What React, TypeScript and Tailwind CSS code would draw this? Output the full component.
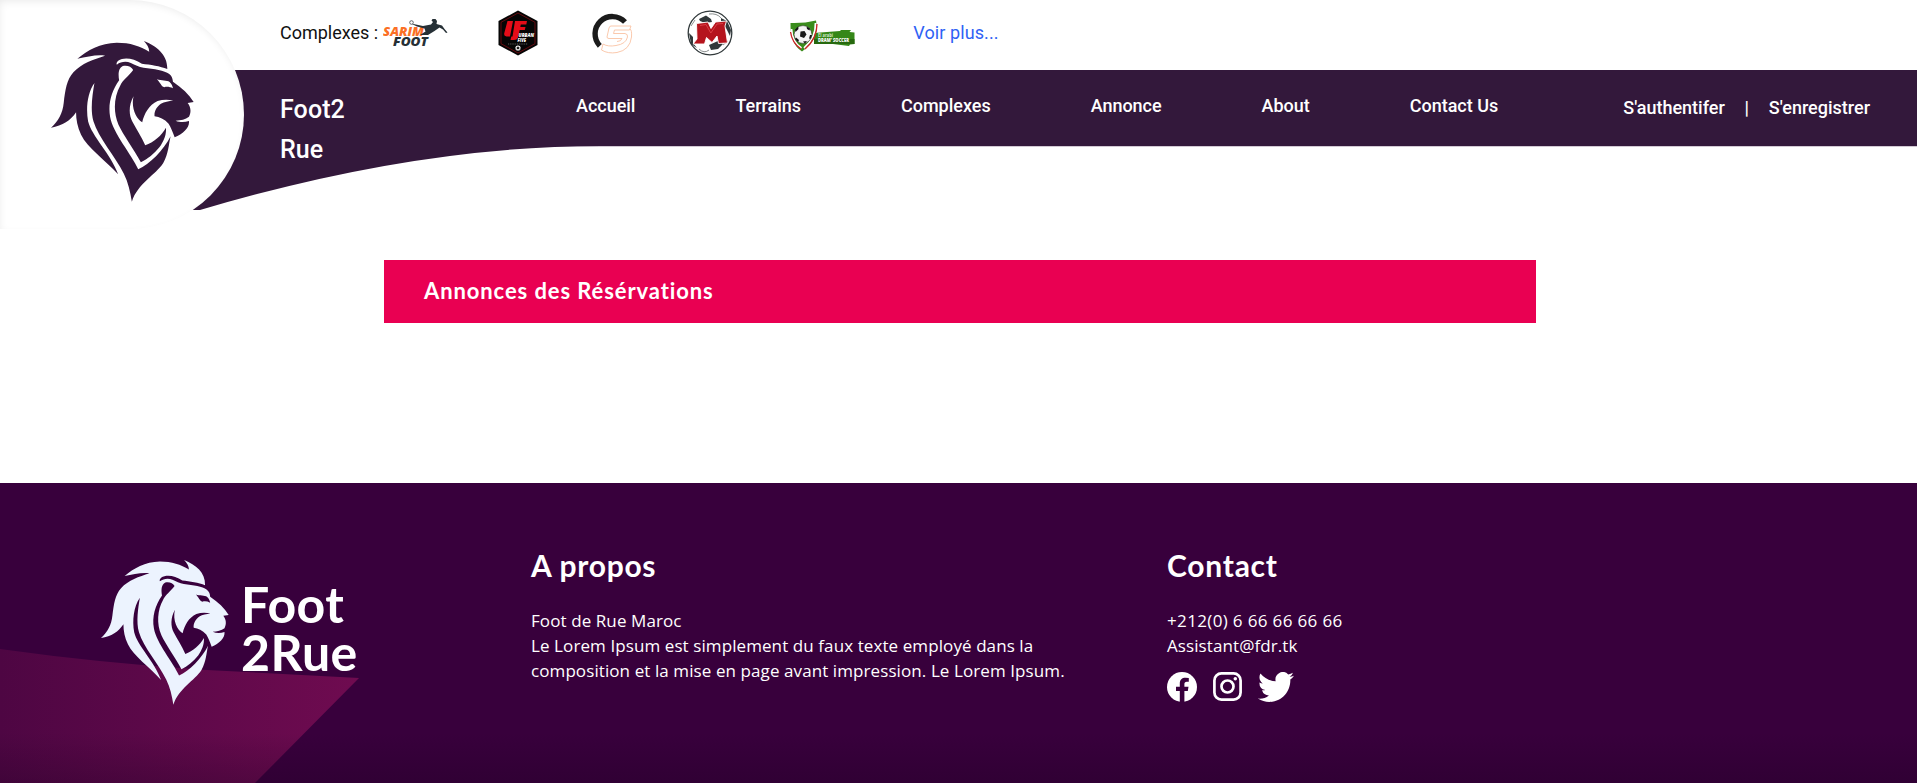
import React from "react";

const LION =
  "M232 177 C262 152 300 130 350 129 C390 129 420 139 447 156 C447 145 440 133 431 124 C470 140 502 165 501 208 C480 199 450 195 425 192 C400 176 372 171 354 183 C350 187 348 191 350 195 C362 186 378 184 392 190 C405 196 415 202 430 204 C462 208 492 212 507 223 C516 230 517 238 518 246 C545 264 566 284 580 307 L562 310 C572 322 573 338 566 351 C555 359 542 362 526 363 C540 369 553 368 566 364 C568 385 548 402 523 413 C518 398 512 384 505 372 C492 358 478 352 463 350 C461 335 470 320 482 312 C492 306 506 304 519 303 C505 299 488 299 472 304 C446 316 432 342 426 368 C408 358 392 325 400 290 C385 318 386 345 396 365 C408 388 424 412 435 437 C460 428 485 407 497 384 C499 405 490 425 478 442 C462 462 442 478 422 488 C402 450 368 404 355 375 C338 335 342 290 360 258 C368 240 385 230 399 211 C394 200 380 196 368 199 C354 206 354 225 357 242 C334 275 323 312 330 352 C338 400 395 465 414 509 C448 494 490 452 511 410 C505 435 505 462 489 490 C467 525 412 552 395 606 C390 575 384 548 371 522 C345 470 295 415 280 365 C270 330 277 285 283 250 C262 280 257 325 264 365 C275 410 330 460 354 524 C315 480 262 445 243 405 C232 382 228 360 228 338 C212 362 188 379 153 384 C175 365 188 340 191 310 C196 270 200 240 220 218 C245 190 280 180 315 168 C290 164 260 172 232 177 Z M470 239 C483 244 500 241 508 247 C514 253 517 259 518 266 C509 262 500 260 492 263 C483 261 480 248 470 239 Z";

function Lion({ className, fill }: { className: string; fill: string }) {
  return (
    <svg viewBox="153 124 428 483" preserveAspectRatio="none" className={className} aria-hidden="true">
      <path d={LION} fill={fill} fillRule="evenodd" />
    </svg>
  );
}

function SarimLogo() {
  return (
    <svg viewBox="0 0 66 30" className="h-[30px] w-[66px] shrink-0">
      <text x="0" y="18" fontFamily="Open Sans, sans-serif" fontWeight="800" fontStyle="italic" fontSize="11.5" textLength="41" lengthAdjust="spacingAndGlyphs" fill="#fb6f24">SARIM</text>
      <text x="10" y="28" fontFamily="Open Sans, sans-serif" fontWeight="800" fontStyle="italic" fontSize="11.5" textLength="35" lengthAdjust="spacingAndGlyphs" fill="#263036">FOOT</text>
      <path d="M28 5.5 L40 8 L48 6.500 L50 4 L48.500 2.500 L49.500 1 L52.500 1 L54 3 L53.500 6 L59 7.500 L61.500 11 L64.500 14.500 L63 15 L60 11.500 L56.500 9.500 L51.500 13 L45 17 L37 17 L42.500 13.500 L41.500 10.500 L34 8.500 Z" fill="#263036" />
      <circle cx="28.500" cy="4.500" r="1.800" fill="#fff" stroke="#263036" strokeWidth=".7" />
    </svg>
  );
}

function UrbanLogo() {
  return (
    <svg viewBox="0 0 40 46" className="h-[46px] w-10 shrink-0">
      <path d="M20 .5 L39.500 11 V35 L20 45.500 L.5 35 V11 Z" fill="#050505" />
      <path d="M20 3 L37 12.300 V33.700 L20 43 L3 33.700 V12.300 Z" fill="none" stroke="#8c0d12" strokeWidth=".7" />
      <path d="M9.500 11 H15 L12 26.500 H8.500 Q5.500 26 6.300 23 Z M17 11 H29 L28.300 14.500 H22.800 L22.300 17 H27.500 L26.800 20 H21.700 L20 27.500 Q19 30 16 30 H12.500 L13.300 26.500 H14.500 Z" fill="#e50c18" />
      <text x="20.500" y="26.500" fontFamily="Open Sans, sans-serif" fontWeight="800" fontStyle="italic" fontSize="5.500" textLength="15.500" lengthAdjust="spacingAndGlyphs" fill="#fff">URBAN</text>
      <text x="19.500" y="32" fontFamily="Open Sans, sans-serif" fontWeight="800" fontStyle="italic" fontSize="5" textLength="8.500" lengthAdjust="spacingAndGlyphs" fill="#fff">FIVE</text>
      <path d="M10 34 H30" stroke="#999" strokeWidth=".6" strokeDasharray="1 .8" />
      <circle cx="20" cy="38" r="2.600" fill="#fff" />
      <path d="M18.800 37.500 L20 36.700 L21.200 37.500 L20.800 39 H19.200 Z M17.500 38.500 L18.300 39.500 M22.500 38.500 L21.700 39.500" fill="#111" stroke="#111" strokeWidth=".5" />
    </svg>
  );
}

function CityFiveLogo() {
  return (
    <svg viewBox="0 0 42 42" className="h-[42px] w-[42px] shrink-0" fill="none">
      <path d="M8.800 33.800 A17 17 0 0 1 34 10" stroke="#1b1b1b" strokeWidth="5.400" />
      <g stroke="#f9c3a4" strokeWidth=".9">
        <path d="M20 14 H40 L38.500 18 H23.500 L22.500 21.500 H34 Q37 22 36.500 25 Q35 32 25 33.500 Q17 35 12 32 L10.500 38 Q17 42 26 40.500 Q39 38 40.500 25 Q41 18 39 17 M20 14 Q18.500 14 18 16 L16 25 Q16 26.500 18 26.500 H31 Q30 29.500 26 29.500" />
      </g>
    </svg>
  );
}

function BallMLogo() {
  return (
    <svg viewBox="0 0 46 46" className="h-[46px] w-[46px] shrink-0">
      <circle cx="23" cy="23" r="21.800" fill="#fff" stroke="#30383a" strokeWidth="1.300" />
      <path d="M12 9 L19 5.500 L24 9 L25 12 L18 13 L13 11 Z M34 8 L40 11 L44 20 L43 26 L39 18 L34 13 Z M2 23 L6 27 L6 33 L10 38 L4 34 Z M22 35 L31 31 L36 34 L31 39 L24 40 Z" fill="#30383a" />
      <path d="M8 10 L4 16 M22 4 Q30 3 34 8 M12 39 Q17 44 22 40 M36 35 L41 31" fill="none" stroke="#6d7374" strokeWidth=".8" />
      <path d="M9.500 13.500 L21 12 L24 18.500 L28.500 12 L39.500 11 L38 16 L40.500 33 L31.500 33.500 L30 26 L25 32.500 L19.500 27.500 L17.500 34 L6 34 L10 29 Z" fill="#b5141d" stroke="#fff" strokeWidth=".9" />
      <path d="M13 15.500 L19 14.500 L23.800 23 L30 14 L36 13.500" fill="none" stroke="#df434a" strokeWidth=".9" />
    </svg>
  );
}

function SoccerLogo() {
  return (
    <svg viewBox="0 0 66 32" className="h-8 w-[66px] shrink-0">
      <path d="M25 13 L51 11 L52 10 H62 L60.500 12 L65.500 12.500 V24 L61 24.500 L60 26 L40 23.500 L25 24 Z" fill="#358718" />
      <path d="M25 19 H65.500 V24 L25 24 Z" fill="#27690f" />
      <path d="M1.500 3 Q15 3.500 27 .5 Q31 19 13 31.500 Q1 24 1.500 3 Z" fill="#3a8c1c" />
      <path d="M2.500 9 Q3 22 12.500 28 M26.500 3 Q27 18 15 28" fill="none" stroke="#fff" strokeWidth="1.800" />
      <path d="M1.500 12 Q3 23 12 29 M28 4 Q28 19 16 29" fill="none" stroke="#cf2127" strokeWidth="1.300" />
      <circle cx="14" cy="14.500" r="8.900" fill="#f3f3f3" stroke="#222" strokeWidth=".5" />
      <path d="M11.500 11.500 L15.500 11 L17.500 14.500 L15 18 L11 16.500 Z M6 9.500 L9 6.500 L9.500 9 L6.500 12 Z M17.500 6.500 L21 8.500 L20.500 10.500 L18 9 Z M21 15 L23 15 L21.500 19 L20 18.500 Z M7 17.500 L10 20 L9 22 L6 19 Z M14 21.500 L18 21 L16 23.500 Z" fill="#161616" />
      <text x="29" y="16.500" fontFamily="Open Sans, sans-serif" fontWeight="700" fontSize="4.500" textLength="15" lengthAdjust="spacingAndGlyphs" fill="#d7e8cf">El arabi</text>
      <text x="29" y="22" fontFamily="Open Sans, sans-serif" fontWeight="800" fontSize="5" textLength="31" lengthAdjust="spacingAndGlyphs" fill="#fff">DRAM' SOCCER</text>
    </svg>
  );
}

function Facebook() {
  return (
    <svg viewBox="0 0 30 30" className="size-[30px]">
      <circle cx="15" cy="15" r="15" fill="#fff" />
      <path d="M12.800 30 V19 H9 V14.700 H12.800 V11.500 C12.800 7.700 15 5.700 18.500 5.700 L21.800 6 V9.700 H19.800 C18 9.700 17.400 10.800 17.400 12 V14.700 H21.500 L20.800 19 H17.400 V30 Z" fill="#38003c" />
    </svg>
  );
}

function Instagram() {
  return (
    <svg viewBox="0 0 29 29" className="size-[29px]" fill="none" stroke="#fff" strokeWidth="2.700">
      <rect x="1.400" y="1.400" width="26.200" height="26.200" rx="7" />
      <circle cx="14.500" cy="14.500" r="6" />
      <circle cx="22.300" cy="6.800" r="1.750" fill="#fff" stroke="none" />
    </svg>
  );
}

function Twitter() {
  return (
    <svg viewBox="0 2.200 24 19.600" preserveAspectRatio="none" className="h-[30px] w-9">
      <path fill="#fff" d="M23.953 4.570a10 10 0 01-2.825.775 4.958 4.958 0 002.163-2.723c-.951.555-2.005.959-3.127 1.184a4.920 4.920 0 00-8.384 4.482C7.690 8.095 4.067 6.130 1.640 3.162a4.822 4.822 0 00-.666 2.475c0 1.710.870 3.213 2.188 4.096a4.904 4.904 0 01-2.228-.616v.060a4.923 4.923 0 003.946 4.827 4.996 4.996 0 01-2.212.085 4.936 4.936 0 004.604 3.417 9.867 9.867 0 01-6.102 2.105c-.390 0-.779-.023-1.170-.067a13.995 13.995 0 007.557 2.209c9.053 0 13.998-7.496 13.998-13.985 0-.210 0-.420-.015-.630A9.935 9.935 0 0024 4.590z" />
    </svg>
  );
}

const NAV = ["Accueil", "Terrains", "Complexes", "Annonce", "About", "Contact Us"];

export default function App() {
  return (
    <div className="flex h-[783px] w-full flex-col overflow-hidden bg-white font-[Roboto,sans-serif]">
      <header className="relative h-[231px] shrink-0">
        <div className="flex h-[70px] items-start pl-[280px]">
          <span className="pt-[19px] text-lg leading-7 text-[#111]">Complexes :</span>
          <div className="ml-[5px] flex items-start">
            <div className="pt-[18px]"><SarimLogo /></div>
            <div className="ml-[49px] pt-[10px]"><UrbanLogo /></div>
            <div className="ml-[53px] pt-3"><CityFiveLogo /></div>
            <div className="ml-[54px] pt-[10px]"><BallMLogo /></div>
            <div className="ml-[56px] pt-5"><SoccerLogo /></div>
          </div>
          <a className="ml-[58px] pt-[19px] text-lg leading-7 tracking-[0.1px] text-[#2f62f5]">Voir plus...</a>
        </div>
        <div className="flex h-[77px] items-start border-b border-[#d2c9d4] bg-[#33183b] pl-[280px] text-white">
          <div className="relative z-10 w-24 shrink-0 pt-5 text-[25px] font-medium leading-10 tracking-[0.1px]">Foot2<br />Rue</div>
          <nav className="ml-[200px] flex gap-[100px] pt-[22px] text-lg font-medium leading-7 tracking-[-0.02px]">
            {NAV.map((item) => <a key={item} className="whitespace-nowrap">{item}</a>)}
          </nav>
          <div className="ml-auto flex pr-[47px] pt-6 text-lg font-medium leading-7">
            <a>S'authentifer</a>
            <span className="w-[44px] text-center">|</span>
            <a>S'enregistrer</a>
          </div>
        </div>
        <svg viewBox="0 0 600 231" className="absolute left-0 top-0 h-[231px] w-[600px]" aria-hidden="true">
          <path d="M180 145 V210 H200 Q415 146 600 146 V145 Z" fill="#33183b" />
        </svg>
        <div className="absolute left-0 top-0 h-[229px] w-[244px] rounded-r-[114.500px] bg-white shadow-[inset_1px_3px_8px_-2px_rgba(0,0,0,0.09)]">
          <Lion className="absolute left-[51px] top-[41px] h-[161px] w-[143px]" fill="#33183b" />
        </div>
      </header>

      <main className="flex h-[252px] shrink-0 justify-center pl-[3px] pt-[29px]">
        <h1 className="h-[63px] w-[1152px] bg-[#e90052] pl-10 font-[Lato,sans-serif] text-[22px] font-bold leading-[62px] tracking-[0.9px] text-white">
          Annonces des Résérvations
        </h1>
      </main>

      <footer className="relative flex h-[300px] shrink-0 bg-[#38003c] text-white">
        <svg viewBox="0 0 1917 300" preserveAspectRatio="none" className="absolute inset-0 h-full w-full" aria-hidden="true">
          <defs>
            <linearGradient id="wedge" x1="0" x2="1">
              <stop offset="0" stopColor="#4e0643" />
              <stop offset="1" stopColor="#6f0b50" />
            </linearGradient>
            <linearGradient id="shade" x1="0" x2="0" y1="0" y2="1">
              <stop offset="0" stopColor="#1c0020" stopOpacity="0" />
              <stop offset="1" stopColor="#1c0020" stopOpacity=".28" />
            </linearGradient>
          </defs>
          <path d="M0 166 Q100 180 207 187 L359 195 L255 300 H0 Z" fill="url(#wedge)" />
          <rect y="250" width="1917" height="50" fill="url(#shade)" />
        </svg>
        <div className="relative flex w-[531px] shrink-0 pl-[101px] pt-[77px]">
          <Lion className="h-[145px] w-32" fill="#ecf3fe" />
          <div className="ml-[12px] pt-[20px] font-[Lato,sans-serif] text-[50px] font-bold leading-[48px] tracking-[0.4px]">
            Foot<br />2Rue
          </div>
        </div>
        <section className="relative w-[636px] shrink-0 pt-[62px]">
          <h2 className="font-[Lato,sans-serif] text-[30px] font-bold leading-10 tracking-[0.7px]">A propos</h2>
          <p className="mt-[23px] whitespace-nowrap font-['Open_Sans',sans-serif] text-[17px] leading-[25px] tracking-[0.09px]">
            Foot de Rue Maroc<br />
            Le Lorem Ipsum est simplement du faux texte employé dans la<br />
            composition et la mise en page avant impression. Le Lorem Ipsum.
          </p>
        </section>
        <section className="relative pt-[62px]">
          <h2 className="font-[Lato,sans-serif] text-[30px] font-bold leading-10 tracking-[0.75px]">Contact</h2>
          <p className="mt-[23px] font-['Open_Sans',sans-serif] text-[17px] leading-[25px]">
            <span className="tracking-[0.35px]">+212(0) 6 66 66 66 66</span><br />
            <span className="tracking-[0.09px]">Assistant@fdr.tk</span>
          </p>
          <div className="mt-[14px] flex gap-4">
            <Facebook />
            <Instagram />
            <Twitter />
          </div>
        </section>
      </footer>
    </div>
  );
}
